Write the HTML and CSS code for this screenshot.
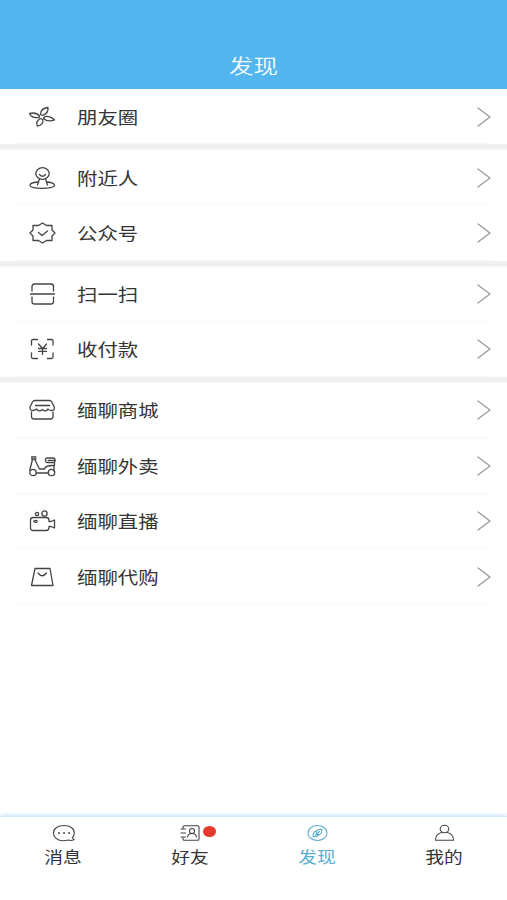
FILE: index.html
```html
<!DOCTYPE html>
<html lang="zh-CN">
<head>
<meta charset="utf-8">
<title>发现</title>
<link rel="stylesheet" href="styles.css">
</head>
<body>
<div class="app">
  <header class="header"><h1 class="title">发现</h1></header>
  <main class="content">
    <section class="group">
      <div class="row"><svg class="icon" viewBox="0 0 28 24"><path d="M12.500 9.500C12.500 5.500 15.500 3 20 2.500C20.500 6 18.500 9 14.500 10.500ZM11 12.500C6.500 13.200 3 11.800 1.500 8.500C5.500 7.500 9.500 8.500 11.500 11ZM16 12.200C19.500 10.500 24 11.800 26.500 15C22.500 16.300 18 15.800 15.500 13.500ZM14.800 14.500C15.500 18 13.500 20.500 9.500 21.200C8 18.500 9 15.500 12.500 13.500Z"/></svg><span class="label">朋友圈</span><svg class="arrow" viewBox="0 0 14 20"><path d="M1 1L13 10L1 19"/></svg></div>
    </section>
    <section class="group">
      <div class="row"><svg class="icon" viewBox="0 0 28 24"><ellipse cx="14.500" cy="7.500" rx="6.700" ry="5.800"/><path d="M11.500 8.500Q14.500 12 17.500 8.500M11.500 13L9.500 19M17.500 13L19.500 19M9.500 16C4 16.500 2 18 2 19.300C2 23.300 26.500 23.300 26.500 19.300C26.500 18 24 16.500 19.500 16"/></svg><span class="label">附近人</span><svg class="arrow" viewBox="0 0 14 20"><path d="M1 1L13 10L1 19"/></svg></div>
      <div class="row"><svg class="icon" viewBox="0 0 28 24"><path d="M14.500 2L18.500 4.500L24 4.500L24 9L27 12L24 15L24 19.500L18.500 19.500L14.500 22L10.500 19.500L5 19.500L5 15L2 12L5 9L5 4.500L10.500 4.500ZM10.500 11.500L14 14.500L19.500 10"/></svg><span class="label">公众号</span><svg class="arrow" viewBox="0 0 14 20"><path d="M1 1L13 10L1 19"/></svg></div>
    </section>
    <section class="group">
      <div class="row"><svg class="icon" viewBox="0 0 28 24"><path d="M4 9V4.500Q4 2 6.500 2H23Q25.500 2 25.500 4.500V9M2.500 12H26.500M4 15V19.500Q4 22 6.500 22H23Q25.500 22 25.500 19.500V15"/></svg><span class="label">扫一扫</span><svg class="arrow" viewBox="0 0 14 20"><path d="M1 1L13 10L1 19"/></svg></div>
      <div class="row"><svg class="icon" viewBox="0 0 28 24"><path d="M3.500 8V4Q3.500 2.500 5 2.500H9.500M19.500 2.500H23.500Q25 2.500 25 4V8M3.500 16V20Q3.500 21.500 5 21.500H9.500M19.500 21.500H23.500Q25 21.500 25 20V16M10.500 7L14.500 11.500L18.500 7M14.500 11.500V17.500M10.500 11.500H18.500M10.500 14.300H18.500"/></svg><span class="label">收付款</span><svg class="arrow" viewBox="0 0 14 20"><path d="M1 1L13 10L1 19"/></svg></div>
    </section>
    <section class="group">
      <div class="row"><svg class="icon" viewBox="0 0 28 24"><path d="M7 2.500H21.500Q23 2.500 23.800 4L26.300 9Q27 12.500 23.500 12.500Q21 12.500 20 11Q17.500 14.500 14.300 11.500Q11 14.500 8.500 11Q7 12.500 5 12.500Q1.300 12.500 2 9L4.500 4Q5.300 2.500 7 2.500ZM7.500 7.500H21.500M3.500 14V18.500Q3.500 21 6 21H22.500Q25 21 25 18.500V14"/></svg><span class="label">缅聊商城</span><svg class="arrow" viewBox="0 0 14 20"><path d="M1 1L13 10L1 19"/></svg></div>
      <div class="row"><svg class="icon" viewBox="0 0 28 24"><path d="M3.500 3H8M3.500 5H8M6.500 5L11.500 15H16.500C17 12.300 19 11.300 26 11.500V17M4.500 5.500L1.800 16M8.500 19H20.500M26.500 8V11.500"/><rect x="17.500" y="4" width="9.500" height="4.500" rx="1.500"/><path d="M20 6.300H27"/><circle cx="5" cy="18.500" r="3.200"/><circle cx="23.500" cy="18.500" r="3.200"/></svg><span class="label">缅聊外卖</span><svg class="arrow" viewBox="0 0 14 20"><path d="M1 1L13 10L1 19"/></svg></div>
      <div class="row"><svg class="icon" viewBox="0 0 28 24"><path d="M5.500 8.500H18Q21 8.500 21 11V12.500H23L26.500 11V19L23 17.500H21V18.500Q21 21.500 18 21.500H5.500Q2.500 21.500 2.500 18.500V11Q2.500 8.500 5.500 8.500Z"/><circle cx="9" cy="5" r="1.600"/><circle cx="16.500" cy="4.500" r="2.600"/><ellipse cx="7.500" cy="12.300" rx="1.700" ry="1"/></svg><span class="label">缅聊直播</span><svg class="arrow" viewBox="0 0 14 20"><path d="M1 1L13 10L1 19"/></svg></div>
      <div class="row"><svg class="icon" viewBox="0 0 28 24"><path d="M7 3.500H22L25 20.500H3.500ZM10 8Q14.300 13.500 18.500 8"/></svg><span class="label">缅聊代购</span><svg class="arrow" viewBox="0 0 14 20"><path d="M1 1L13 10L1 19"/></svg></div>
    </section>
  </main>
  <nav class="tabs">
    <div class="tab"><svg class="tab-icon" viewBox="0 0 24 18"><path d="M23 15.500C21.500 16.500 19.500 16.700 17.500 16C9 18.300 2.500 14.500 2.500 9C2.500 4.500 7 1.500 13 1.500C19 1.500 23.300 4.500 23.300 9C23.300 11 22.500 12.500 21.500 13.500Q21.800 15 23 15.500Z"/><path class="dots" d="M8 9H8.100M13 9H13.100M18 9H18.100"/></svg><span class="tab-label">消息</span></div>
    <div class="tab"><svg class="tab-icon" viewBox="0 0 24 18"><path d="M5 4V3Q5 1.800 6.500 1.800H19.500Q21 1.800 21 3V15Q21 16.300 19.500 16.300H6.500Q5 16.300 5 15V14M3 5H7.500M3 9H7.500M3 13H7.500"/><circle cx="14" cy="7" r="2.500"/><path d="M9.500 13Q10 9.500 14 9.500Q18 9.500 18.500 13"/></svg><i class="badge"></i><span class="tab-label">好友</span></div>
    <div class="tab active"><svg class="tab-icon" viewBox="0 0 24 18"><ellipse cx="12.500" cy="9" rx="9.500" ry="7.500"/><path d="M8 12.500Q8 8 11 7Q13.500 5 17 5.500Q17 9.500 14.500 10.500Q12 13 8 12.500ZM10.500 11L14.500 7.500M11.500 7.500V10.500H14.500"/></svg><span class="tab-label">发现</span></div>
    <div class="tab"><svg class="tab-icon" viewBox="0 0 24 18"><ellipse cx="12.500" cy="5" rx="4.300" ry="3.700"/><path d="M9.500 8.500C6 9.500 3.500 12 3.500 16.200H21.500C21.500 12 19 9.500 15.500 8.500"/></svg><span class="tab-label">我的</span></div>
  </nav>
</div>
</body>
</html>
```
FILE: styles.css
```css
* { box-sizing: border-box; }
body {
  margin: 0;
  background: #fff;
  color: #343434;
  font-family: "Noto Sans CJK SC", sans-serif;
}
.app {
  display: flex;
  flex-direction: column;
  height: 900px;
  overflow: hidden;
}
.header {
  flex: none;
  display: flex;
  justify-content: center;
  align-items: flex-end;
  height: 89px;
  padding-bottom: 9px;
  background: #52b5ee;
}
.title {
  margin: 0;
  color: #f4fbff;
  font-size: 20.5px;
  line-height: 30px;
  font-weight: 350;
  transform: scaleX(1.19);
}
.content { flex: 1; }
.group + .group {
  padding-top: 5.5px;
  background: linear-gradient(#f0f0f2, #f0f0f2) 0 0 / 100% 5.5px no-repeat;
}
.row {
  display: flex;
  align-items: center;
  height: 55.45px;
  padding: 0 16px 0 28px;
  background: linear-gradient(#f7f7f7, #f7f7f7) 16px 100% / 475px 1px no-repeat;
}
.icon {
  width: 28px;
  height: 24px;
  margin-right: 21px;
}
svg {
  flex: none;
  fill: none;
  stroke: #444;
  stroke-width: 1.3;
  stroke-linecap: round;
  stroke-linejoin: round;
}
.label {
  font-size: 17.3px;
  line-height: 26px;
  transform: scaleX(1.18);
  transform-origin: left center;
}
.arrow {
  width: 14px;
  height: 20px;
  margin-left: auto;
  stroke: #999;
}
.tabs {
  flex: none;
  display: flex;
  height: 84px;
  padding-top: 7px;
  border-top: 1px solid #d5e8f9;
  box-shadow: 0 -1px 4px #c5e2fa;
}
.tab {
  position: relative;
  flex: 1;
  display: flex;
  flex-direction: column;
  align-items: center;
}
.tab-icon {
  width: 24px;
  height: 18px;
  stroke-width: 1.1;
}
.dots { stroke-width: 1.8; }
.tab-label {
  margin-top: 3px;
  font-size: 16px;
  line-height: 23px;
  transform: scaleX(1.17);
}
.active { color: #5cb0cf; }
.active svg { stroke: #5cb0cf; }
.badge {
  position: absolute;
  top: 2px;
  left: calc(50% + 13px);
  width: 13px;
  height: 11px;
  border-radius: 50%;
  background: #e43a2c;
}
```
